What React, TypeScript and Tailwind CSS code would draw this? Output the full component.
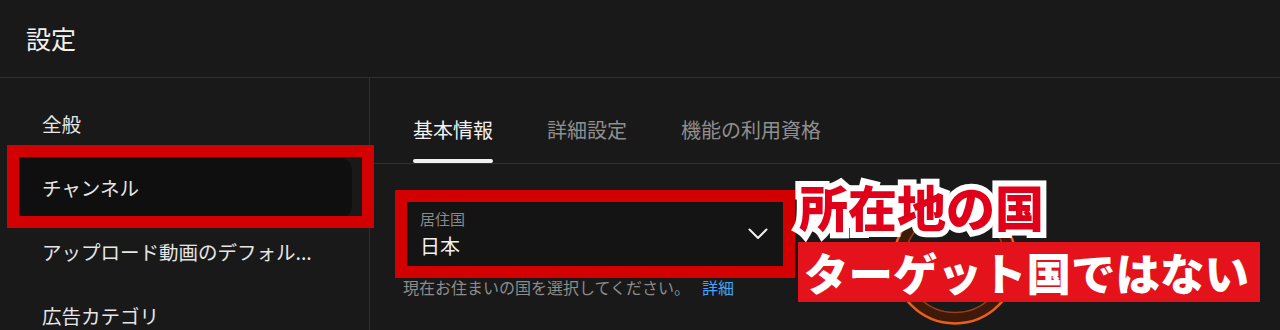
import React from "react";

const jp = "font-['Noto_Sans_CJK_JP','Noto_Sans',sans-serif]";

const sideItems = ["全般", "チャンネル", "アップロード動画のデフォル...", "広告カテゴリ"];
const tabs = ["基本情報", "詳細設定", "機能の利用資格"];

function Chevron() {
  return (
    <svg width="20" height="12" viewBox="0 0 20 12" fill="none">
      <polyline points="1.5,1.5 10,10 18.5,1.5" stroke="#f1f1f1" strokeWidth="2" strokeLinecap="round" strokeLinejoin="round" />
    </svg>
  );
}

function Ring() {
  return (
    <svg width="128" height="128" viewBox="0 0 128 128" fill="none">
      <circle cx="64" cy="64" r="56" stroke="#3f1a0b" strokeWidth="12" />
      <circle cx="64" cy="64" r="61.5" stroke="#e8601a" strokeWidth="2.5" />
      <circle cx="64" cy="64" r="50.5" stroke="#9a3e14" strokeWidth="1.5" />
    </svg>
  );
}

export default function App() {
  return (
    <div className={`relative h-[330px] w-[1280px] overflow-hidden bg-[#191919] text-[#f1f1f1] ${jp}`}>
      <header className="flex h-[78px] items-center border-b border-[#2f2f2f] pl-[26px]">
        <h1 className="text-[25px] leading-none">設定</h1>
      </header>

      <div className="flex">
        <aside className="w-[370px] shrink-0 border-r border-[#2f2f2f] pt-[14px]">
          {sideItems.map((label, i) => (
            <div key={label} className="flex h-[64px] items-center">
              <div
                className={`ml-[12px] mr-[17px] flex h-[60px] flex-1 items-center rounded-r-[12px] pl-[30px] text-[19.5px] text-[#e6e6e6] ${
                  i === 1 ? "bg-[#0f0f0f]" : ""
                }`}
              >
                {label}
              </div>
            </div>
          ))}
        </aside>

        <main className="flex-1">
          <nav className="flex h-[86px] gap-[54px] border-b border-[#2f2f2f] pl-[43px]">
            {tabs.map((t, i) => (
              <div key={t} className="flex flex-col pt-[38px]">
                <span className={`text-[20px] leading-[28px] ${i === 0 ? "text-[#f1f1f1]" : "text-[#8f8f8f]"}`}>{t}</span>
                {i === 0 && <span className="mt-[15px] h-[4px] rounded-full bg-[#f1f1f1]" />}
              </div>
            ))}
          </nav>

          <div className="pl-[33px] pt-[34px]">
            <div className="flex h-[72px] w-[384px] items-center justify-between rounded-[4px] border border-[#3a3a3a] bg-[#141414] pl-[16px] pr-[18px]">
              <div className="flex flex-col">
                <span className="text-[15px] leading-[20px] text-[#8a8a8a]">居住国</span>
                <span className="mt-[4px] text-[20px] leading-[26px] text-[#f1f1f1]">日本</span>
              </div>
              <Chevron />
            </div>
            <p className="mt-[6px] text-[16px] leading-[22px] text-[#8c8c8c]">
              現在お住まいの国を選択してください。<span className="ml-[12px] text-[#3ea6ff]">詳細</span>
            </p>
          </div>
        </main>
      </div>

      {/* annotation overlays */}
      <div className="absolute left-[7px] top-[145px] h-[83px] w-[367px] border-[12px] border-[#d20000]" />
      <div className="absolute left-[395px] top-[190px] h-[88px] w-[400px] border-[12px] border-[#d20000]" />

      <div className="absolute left-[891px] top-[198px]">
        <Ring />
      </div>

      <div className="absolute left-[799px] top-[174px] grid font-black">
        <span className="col-start-1 row-start-1 text-[49px] leading-[64px] text-white [-webkit-text-stroke:12px_white]">
          所在地の国
        </span>
        <span className="col-start-1 row-start-1 text-[49px] leading-[64px] text-[#e0001a]">所在地の国</span>
      </div>

      <div className="absolute left-[798px] top-[242px] flex h-[60px] w-[462px] items-center bg-[#e3121b] pl-[6px] text-[44.5px] font-black leading-none text-white">
        ターゲット国ではない
      </div>
    </div>
  );
}
